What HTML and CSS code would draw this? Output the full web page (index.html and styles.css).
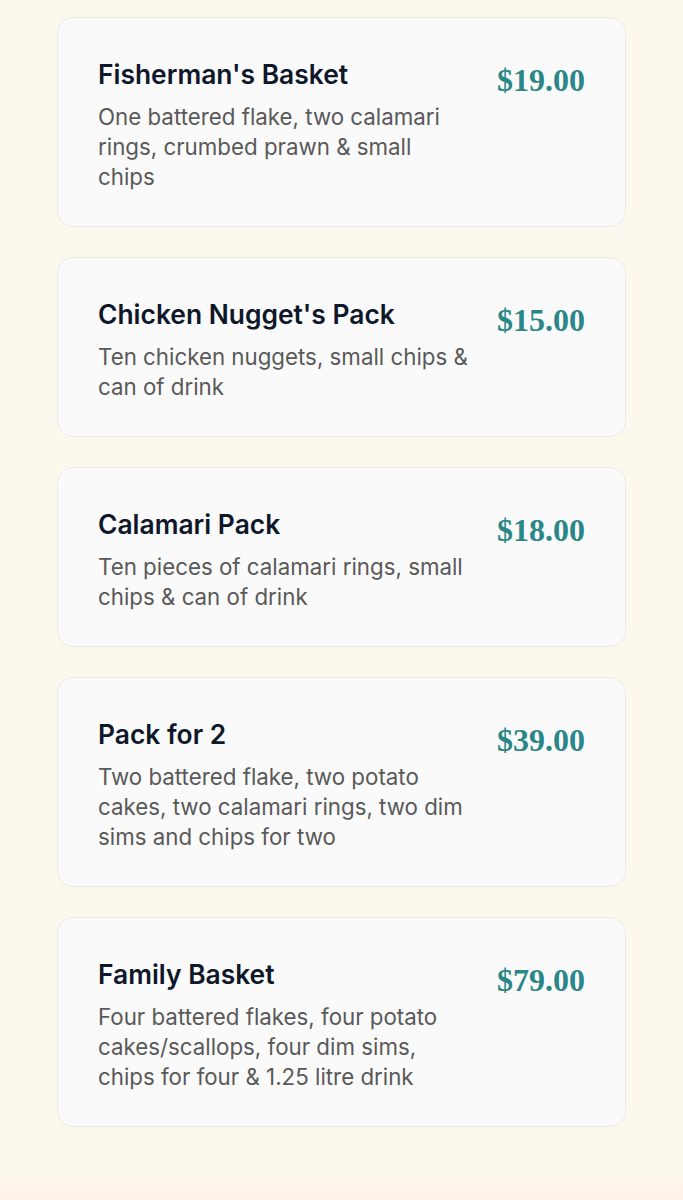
FILE: index.html
```html
<!DOCTYPE html>
<html lang="en">
<head>
    <meta charset="UTF-8">
    <meta name="viewport" content="width=device-width, initial-scale=1.0">
    <title>Packs</title>
    <link rel="stylesheet" href="styles.css">
</head>
<body>
    <section class="menu">
        <div class="card">
            <div class="info">
                <h3>Fisherman's Basket</h3>
                <p>One battered flake, two calamari rings, crumbed prawn &amp; small chips</p>
            </div>
            <span class="price">$19.00</span>
        </div>
        <div class="card">
            <div class="info">
                <h3>Chicken Nugget's Pack</h3>
                <p>Ten chicken nuggets, small chips &amp; can of drink</p>
            </div>
            <span class="price">$15.00</span>
        </div>
        <div class="card">
            <div class="info">
                <h3>Calamari Pack</h3>
                <p>Ten pieces of calamari rings, small chips &amp; can of drink</p>
            </div>
            <span class="price">$18.00</span>
        </div>
        <div class="card">
            <div class="info">
                <h3>Pack for 2</h3>
                <p>Two battered flake, two potato cakes, two calamari rings, two dim sims and chips for two</p>
            </div>
            <span class="price">$39.00</span>
        </div>
        <div class="card">
            <div class="info">
                <h3>Family Basket</h3>
                <p>Four battered flakes, four potato cakes/scallops, four dim sims, chips for four &amp; 1.25 litre drink</p>
            </div>
            <span class="price">$79.00</span>
        </div>
    </section>
    <div class="next"></div>
</body>
</html>
```

FILE: styles.css
```css
body {
    margin: 0;
    background-color: #fdf8ee;
    font-family: Inter, "Noto Sans", sans-serif;
}
.menu {
    display: flex;
    flex-direction: column;
    gap: 30px;
    padding: 17px 57px 0;
}
.card {
    display: flex;
    justify-content: space-between;
    align-items: flex-start;
    background-color: #fafafa;
    border: 1px solid #ebe9e6;
    border-radius: 16px;
    padding: 40px 40px 34px;
}
.info {
    max-width: 373px;
}
.info h3 {
    margin: 0 0 12px;
    font-size: 26.4px;
    line-height: 32px;
    font-weight: 600;
    color: #0f172a;
}
.info p {
    margin: 0;
    font-size: 22.3px;
    line-height: 30px;
    color: #595959;
}
.price {
    margin-top: 2px;
    font-family: "Liberation Serif", serif;
    font-weight: bold;
    font-size: 32px;
    line-height: 40px;
    color: #2b8787;
}
.next {
    margin-top: 52px;
    height: 30px;
    background: linear-gradient(#fdf5ec, #fdf1ea);
}
```
